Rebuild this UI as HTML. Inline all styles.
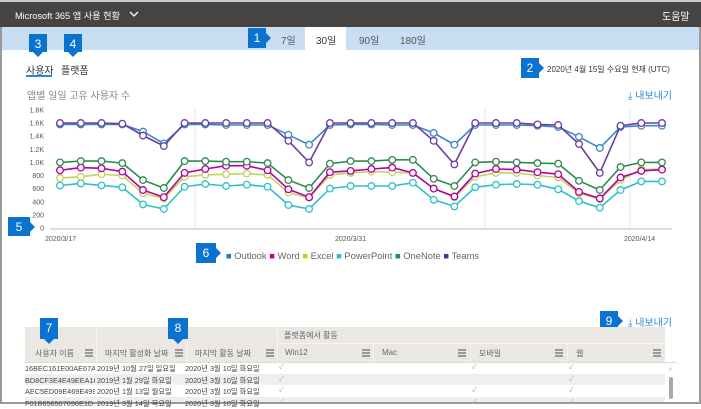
<!DOCTYPE html>
<html><head><meta charset="utf-8"><style>
*{margin:0;padding:0;box-sizing:border-box}
body{width:701px;height:404px;overflow:hidden;background:#fff;font-family:"Liberation Sans","Noto Sans CJK KR",sans-serif;position:relative;color:#333}
.a{position:absolute;white-space:nowrap}
.bd{position:absolute;background:#0a73d0;color:#fff;font-size:12px;text-align:center;line-height:20px}
.hb{position:absolute;width:8px;height:9px;background:repeating-linear-gradient(#999 0 2px,#e9e6e2 2px 3px)}
.t{font-size:7.3px;color:#444;line-height:11.5px}
</style></head><body>
<div class="a" style="left:0;top:0;width:701px;height:404px;border:2px solid #9a9a9a;border-top:none"></div>
<div class="a" style="left:0;top:0;width:701px;height:27px;background:#454443;border-top:2px solid #c8c8c8"></div>
<div class="a" style="left:15px;top:8px;color:#fff;font-size:9.2px">Microsoft 365 앱 사용 현황</div>
<svg class="a" style="left:129px;top:11px" width="10" height="7"><path d="M1 1 L5 5 L9 1" stroke="#fff" stroke-width="1.3" fill="none"/></svg>
<div class="a" style="left:662px;top:8px;color:#fff;font-size:10px">도움말</div>
<div class="a" style="left:2px;top:27px;width:697px;height:23px;background:#c9def3"></div>
<div class="a" style="left:305px;top:27px;width:41px;height:23px;background:#fff"></div>
<div class="a" style="left:281px;top:32px;font-size:10px;color:#555">7일</div>
<div class="a" style="left:316px;top:32px;font-size:10px;color:#333">30일</div>
<div class="a" style="left:359px;top:32px;font-size:10px;color:#555">90일</div>
<div class="a" style="left:400px;top:32px;font-size:10px;color:#555">180일</div>
<div class="bd" style="left:248px;top:28px;width:18px;height:20px">1</div>
<svg class="a" style="left:266px;top:33px" width="5" height="10"><path d="M0 0 L5 5 L0 10Z" fill="#0a73d0"/></svg>
<div class="bd" style="left:29px;top:34px;width:18px;height:18px">3</div>
<svg class="a" style="left:33px;top:52px" width="10" height="5"><path d="M0 0 L5 5 L10 0Z" fill="#0a73d0"/></svg>
<div class="bd" style="left:64px;top:34px;width:18px;height:18px">4</div>
<svg class="a" style="left:68px;top:52px" width="10" height="5"><path d="M0 0 L5 5 L10 0Z" fill="#0a73d0"/></svg>
<div class="a" style="left:26px;top:62px;font-size:10px;color:#333">사용자</div>
<div class="a" style="left:26px;top:75px;width:26px;height:2px;background:#2b88d8"></div>
<div class="a" style="left:61px;top:62px;font-size:10px;color:#333">플랫폼</div>
<div class="bd" style="left:521px;top:58px;width:18px;height:20px">2</div>
<svg class="a" style="left:539px;top:63px" width="5" height="10"><path d="M0 0 L5 5 L0 10Z" fill="#0a73d0"/></svg>
<div class="a" style="left:547px;top:64px;font-size:8px;color:#333">2020년 4월 15일 수요일 현재 (UTC)</div>
<div class="a" style="left:27px;top:87px;font-size:10px;color:#888">앱별 일일 고유 사용자 수</div>
<div class="a" style="left:628px;top:87px;font-size:10px;color:#2b88d8">⤓ 내보내기</div>
<svg class="a" id="ch" style="left:0;top:100px" width="701" height="170"></svg>
<div class="bd" style="left:8px;top:217px;width:22px;height:19px">5</div>
<svg class="a" style="left:30px;top:222px" width="5" height="10"><path d="M0 0 L5 5 L0 10Z" fill="#0a73d0"/></svg>
<div class="bd" style="left:196px;top:243px;width:20px;height:20px">6</div>
<svg class="a" style="left:216px;top:248px" width="5" height="10"><path d="M0 0 L5 5 L0 10Z" fill="#0a73d0"/></svg>
<div class="a" style="left:226px;top:250px;font-size:9.4px;color:#666">
<span style="color:#2e75b6">■</span> Outlook <span style="color:#b4009e">■</span> Word <span style="color:#bad80a">■</span> Excel <span style="color:#2ec0c9">■</span> PowerPoint <span style="color:#2e8b4f">■</span> OneNote <span style="color:#5c2d91">■</span> Teams</div>
<div class="bd" style="left:600px;top:311px;width:18px;height:19px">9</div>
<svg class="a" style="left:618px;top:316px" width="5" height="10"><path d="M0 0 L5 5 L0 10Z" fill="#0a73d0"/></svg>
<div class="a" style="left:628px;top:314px;font-size:10px;color:#2b88d8">⤓ 내보내기</div>
<div class="a" style="left:25px;top:327px;width:640px;height:35px;background:#ebe7e3"></div>
<div class="a" style="left:96px;top:327px;width:1px;height:35px;background:#f6f4f2"></div>
<div class="a" style="left:187px;top:327px;width:1px;height:35px;background:#f6f4f2"></div>
<div class="a" style="left:277px;top:327px;width:1px;height:35px;background:#f6f4f2"></div>
<div class="a" style="left:277px;top:343px;width:388px;height:1px;background:#f6f4f2"></div>
<div class="a" style="left:373px;top:343px;width:1px;height:19px;background:#f6f4f2"></div>
<div class="a" style="left:470px;top:343px;width:1px;height:19px;background:#f6f4f2"></div>
<div class="a" style="left:567px;top:343px;width:1px;height:19px;background:#f6f4f2"></div>
<div class="a" style="left:25px;top:362px;width:652px;height:1px;background:#ddd"></div>
<div class="a" style="left:284px;top:330px;font-size:8px;color:#666">플랫폼에서 활동</div>
<div class="a" style="left:35px;top:348px;font-size:8px;color:#666">사용자 이름</div>
<div class="a" style="left:105px;top:348px;font-size:8px;color:#666">마지막 활성화 날짜</div>
<div class="a" style="left:195px;top:348px;font-size:8px;color:#666">마지막 활동 날짜</div>
<div class="a" style="left:285px;top:348px;font-size:8px;color:#666">Win12</div>
<div class="a" style="left:382px;top:348px;font-size:8px;color:#666">Mac</div>
<div class="a" style="left:479px;top:348px;font-size:8px;color:#666">모바일</div>
<div class="a" style="left:576px;top:348px;font-size:8px;color:#666">웹</div>
<div class="hb" style="left:85px;top:349px"></div><div class="hb" style="left:175px;top:349px"></div><div class="hb" style="left:266px;top:349px"></div><div class="hb" style="left:362px;top:349px"></div><div class="hb" style="left:458px;top:349px"></div><div class="hb" style="left:555px;top:349px"></div><div class="hb" style="left:653px;top:349px"></div>
<div class="bd" style="left:40px;top:318px;width:18px;height:21px">7</div>
<svg class="a" style="left:44px;top:339px" width="10" height="5"><path d="M0 0 L5 5 L10 0Z" fill="#0a73d0"/></svg>
<div class="bd" style="left:168px;top:318px;width:20px;height:21px">8</div>
<svg class="a" style="left:173px;top:339px" width="10" height="5"><path d="M0 0 L5 5 L10 0Z" fill="#0a73d0"/></svg>
<div class="a" style="left:25px;top:374px;width:640px;height:11px;background:#efefef"></div>
<div class="a" style="left:25px;top:397px;width:640px;height:5px;background:#efefef"></div>
<div class="a t" style="left:25px;top:363px;width:70px;overflow:hidden">16BEC161E00AE67A...<br>BD8CF3E4E49EEA1C...<br>AEC5ED09E469E499...<br>F01B656507090E1D...</div>
<div class="a t" style="left:97px;top:363px">2019년 10월 27일 일요일<br>2019년 1월 29일 화요일<br>2020년 1월 13일 월요일<br>2019년 3월 14일 목요일</div>
<div class="a t" style="left:185px;top:363px">2020년 3월 10일 화요일<br>2020년 3월 10일 화요일<br>2020년 3월 10일 화요일<br>2020년 3월 10일 화요일</div>
<div class="a" style="left:279px;top:362px;font-size:7px;color:#aaa;line-height:11.5px">✓<br>✓<br>✓<br>✓</div>
<div class="a" style="left:472px;top:362px;font-size:7px;color:#aaa;line-height:11.5px">✓<br><br>✓<br>✓</div>
<div class="a" style="left:569px;top:362px;font-size:7px;color:#aaa;line-height:11.5px">✓<br>✓<br>✓<br>✓</div>
<div class="a" style="left:669px;top:377px;width:4px;height:22px;background:#a8a8a8;border-radius:2px"></div>
<div class="a" style="left:668px;top:366px;font-size:5px;color:#ccc">▲</div>
<script>
var s=document.getElementById('ch'),h='';
function Y(v){return 128-v*65.6}
h+='<line x1="50" y1="129" x2="672" y2="129" stroke="#bbb"/>';
[195,485,630].forEach(function(x){h+='<line x1="'+x+'" y1="8" x2="'+x+'" y2="129" stroke="#e6e6e6"/>'});
['0','200','400','600','800','1.0K','1.2K','1.4K','1.6K','1.8K'].forEach(function(t,i){h+='<text x="44" y="'+(Y(i*0.2)+2.5)+'" font-size="7" fill="#555" text-anchor="end" font-family="Liberation Sans">'+t+'</text>'});
[['2020/3/17',45],['2020/3/31',335],['2020/4/14',624]].forEach(function(a){h+='<text x="'+a[1]+'" y="141" font-size="7" fill="#555" font-family="Liberation Sans">'+a[0]+'</text>'});
var D=[
['#3a86c8',[1.58,1.58,1.58,1.58,1.47,1.29,1.58,1.58,1.57,1.57,1.57,1.42,1.27,1.57,1.58,1.58,1.57,1.57,1.45,1.27,1.57,1.57,1.57,1.56,1.54,1.39,1.22,1.54,1.56,1.56]],
['#2ec0c9',[.65,.68,.65,.62,.36,.29,.63,.67,.64,.66,.63,.35,.29,.6,.64,.64,.64,.69,.43,.33,.62,.66,.67,.66,.59,.41,.31,.58,.71,.71]],
['#c3d45a',[.76,.78,.82,.8,.53,.45,.78,.81,.82,.83,.81,.54,.46,.81,.84,.86,.85,.84,.6,.47,.78,.84,.84,.8,.77,.53,.44,.73,.89,.9]],
['#b4009e',[.88,.92,.91,.86,.58,.47,.84,.9,.95,.95,.88,.59,.47,.85,.87,.9,.92,.84,.6,.48,.83,.9,.89,.85,.82,.55,.45,.77,.87,.89]],
['#2e8b4f',[1,1.02,1.02,.99,.73,.61,1.02,1.02,1.01,1.01,.99,.73,.61,.98,1.02,1.02,1.04,1.04,.75,.64,1,1.01,1,.99,.98,.72,.58,.93,1,1]],
['#6b3fa0',[1.6,1.6,1.6,1.59,1.41,1.25,1.6,1.6,1.6,1.6,1.6,1.33,1,1.6,1.6,1.6,1.6,1.6,1.33,.97,1.6,1.6,1.6,1.58,1.57,1.28,.84,1.56,1.6,1.6]]];
D.forEach(function(d){var p=[];d[1].forEach(function(v,i){p.push((60+i*20.76).toFixed(1)+','+Y(v).toFixed(1))});
h+='<polyline points="'+p.join(' ')+'" fill="none" stroke="'+d[0]+'" stroke-width="1.6"/>';
p.forEach(function(q){var c=q.split(',');h+='<circle cx="'+c[0]+'" cy="'+c[1]+'" r="3.3" fill="#fff" stroke="'+d[0]+'" stroke-width="1.3"/>'})});
s.innerHTML=h;
</script>
</body></html>
